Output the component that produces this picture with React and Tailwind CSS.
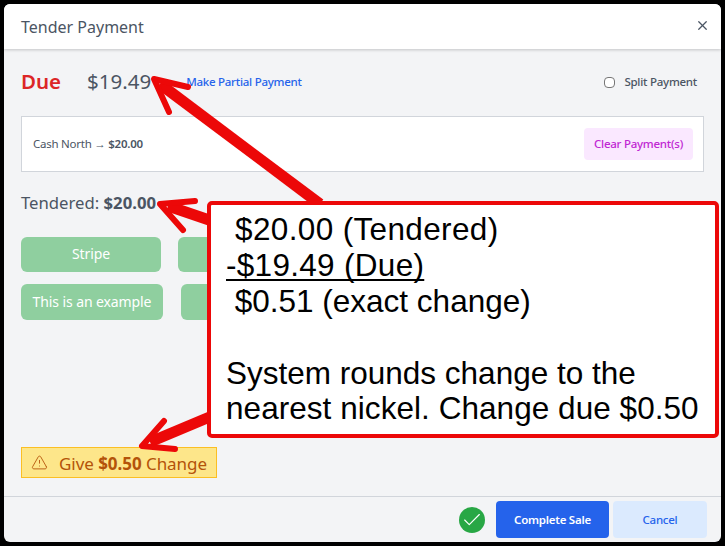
import { X, TriangleAlert, Check } from 'lucide-react'

function PayButton({ label, className }) {
  return (
    <button className={`rounded-md bg-[#8fcf9f] text-sm tracking-[-0.1px] text-white ${className}`}>{label}</button>
  )
}

function Annotations() {
  return (
    <>
      <svg className="absolute inset-0 h-full w-full" viewBox="0 0 725 546" fill="none" stroke="#ec0808" strokeLinecap="round" strokeLinejoin="round">
        <path d="M320 204 L160 84" strokeWidth="11" strokeLinecap="butt" />
        <path d="M188 87 L154 79 L169 112" strokeWidth="6" />
        <path d="M215 222 L168 206" strokeWidth="11" strokeLinecap="butt" />
        <path d="M195 201 L160 204 L183 230" strokeWidth="6" />
        <path d="M212 416 L150 442" strokeWidth="11" strokeLinecap="butt" />
        <path d="M164 421 L142 446 L175 449" strokeWidth="6" />
      </svg>
      <div className="absolute left-[207px] top-[201px] h-[237px] w-[512px] rounded-[5px] border-4 border-[#ec0808] bg-white pl-[15px] font-['Liberation_Sans',sans-serif] text-[31.5px] leading-[36px] text-black">
        <div className="pt-[6px] whitespace-pre tracking-[0.35px]"> $20.00 (Tendered)</div>
        <div className="whitespace-pre tracking-[0.3px] underline decoration-2 underline-offset-[3px] [text-decoration-skip-ink:none]">-$19.49 (Due)</div>
        <div className="whitespace-pre"> $0.51 (exact change)</div>
        <div className="h-[36px]" />
        <div>System rounds change to the</div>
        <div className="-mt-px whitespace-nowrap tracking-[0.05px]">nearest nickel. Change due $0.50</div>
      </div>
    </>
  )
}

export default function App() {
  return (
    <div className="relative h-[546px] w-[725px] overflow-hidden bg-black p-1 font-['Noto_Sans',sans-serif]">
      <div className="flex h-[538px] w-[717px] flex-col overflow-hidden rounded-md bg-[#f3f4f6]">
        <div className="flex h-[45px] shrink-0 items-center justify-between bg-white pl-[17px] pr-[11px] shadow-[0_1px_3px_rgba(0,0,0,0.2)]">
          <h1 className="text-base text-[#4b5563]">Tender Payment</h1>
          <X size={15} className="-mt-0.5 text-[#4b5563]" />
        </div>

        <div className="flex flex-1 flex-col px-[17px]">
          <div className="mt-[14px] flex h-[36px] items-center">
            <span className="w-[66px] text-[20.5px] font-semibold text-[#dc2626]">Due</span>
            <span className="text-[20.5px] text-[#4b5563]">$19.49</span>
            <a className="ml-[35px] mt-[2px] text-[11.5px] font-medium tracking-[-0.25px] text-[#2563eb]">Make Partial Payment</a>
            <label className="ml-auto mr-[7px] mt-[2px] flex items-center gap-[9px] text-[11.5px] font-medium tracking-[-0.25px] text-[#4b5563]">
              <span className="h-[11px] w-[11px] rounded-sm border border-[#767676] bg-white" />
              Split Payment
            </label>
          </div>

          <div className="mt-[17px] flex h-[56px] items-center justify-between border border-[#d1d5db] bg-white pl-[11px] pr-[10px]">
            <span className="text-[11.5px] tracking-[-0.25px] text-[#4b5563]">
              Cash North → <span className="font-semibold">$20.00</span>
            </span>
            <button className="h-[32px] w-[109px] rounded bg-[#fae8ff] text-[11.5px] font-medium tracking-[-0.25px] text-[#c026d3]">Clear Payment(s)</button>
          </div>

          <div className="mt-[19px] text-[16.7px] leading-6 text-[#4b5563]">
            Tendered: <span className="font-bold">$20.00</span>
          </div>

          <div className="mt-[22px] flex gap-[17px]">
            <PayButton label="Stripe" className="h-[35px] w-[140px] pb-0.5" />
            <div className="h-[35px] w-[140px] rounded-md bg-[#8fcf9f]" />
          </div>
          <div className="mt-[12px] flex gap-[18px]">
            <PayButton label="This is an example" className="h-[36px] w-[142px]" />
            <div className="h-[36px] w-[140px] rounded-md bg-[#8fcf9f]" />
          </div>

          <div className="mt-auto mb-[18px] flex h-[31px] w-[196px] items-center border border-[#fbbf24] bg-[#fde68a] pl-[9px] text-[17px] tracking-[-0.05px] text-[#b45309]">
            <TriangleAlert size={17} strokeWidth={1.25} />
            <span className="ml-[11px] mt-0.5">Give <span className="font-bold">$0.50</span> Change</span>
          </div>
        </div>

        <div className="flex h-[46px] shrink-0 items-center justify-end border-t border-[#d1d5db] pr-[14px]">
          <span className="mr-[11px] flex h-[26px] w-[26px] items-center justify-center rounded-full bg-[#28a745] text-white">
            <Check size={22} strokeWidth={1.25} />
          </span>
          <button className="h-[37px] w-[113px] rounded bg-[#2563eb] text-[11.5px] font-semibold tracking-[-0.25px] text-white">Complete Sale</button>
          <button className="ml-1 h-[37px] w-[94px] rounded bg-[#dbeafe] text-[11.5px] font-medium tracking-[-0.25px] text-[#2563eb]">Cancel</button>
        </div>
      </div>
      <Annotations />
    </div>
  )
}
